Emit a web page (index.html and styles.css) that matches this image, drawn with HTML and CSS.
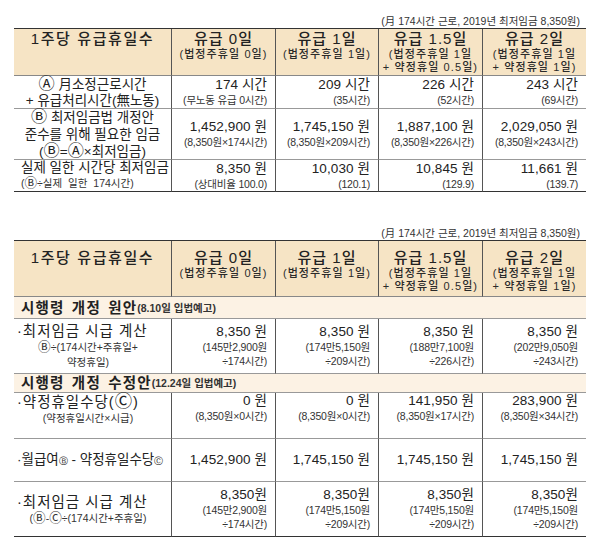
FILE: index.html
```html
<!DOCTYPE html>
<html lang="ko">
<head>
<meta charset="utf-8">
<link rel="stylesheet" href="styles.css">
</head>
<body>
<div class="page">
  <div class="caption">(月 174시간 근로, 2019년 최저임금 8,350원)</div>
  <div class="grid t1">
    <div class="c hd first"><div class="ttl wide">1주당 유급휴일수</div></div>
    <div class="c hd"><div class="ttl">유급 0일</div><div class="sub">(법정주휴일 0일)</div></div>
    <div class="c hd"><div class="ttl">유급 1일</div><div class="sub">(법정주휴일 1일)</div></div>
    <div class="c hd"><div class="ttl">유급 1.5일</div><div class="sub">(법정주휴일 1일</div><div class="sub">+ 약정휴일 0.5일)</div></div>
    <div class="c hd last"><div class="ttl">유급 2일</div><div class="sub">(법정주휴일 1일</div><div class="sub">+ 약정휴일 1일)</div></div>

    <div class="c lab ctr"><div class="ln"><span class="circ">Ⓐ</span> 月소정근로시간</div><div class="ln">+ 유급처리시간(無노동)</div></div>
    <div class="c val"><div class="v">174 시간</div><div class="s">(무노동 유급 0시간)</div></div>
    <div class="c val"><div class="v">209 시간</div><div class="s">(35시간)</div></div>
    <div class="c val"><div class="v">226 시간</div><div class="s">(52시간)</div></div>
    <div class="c val last"><div class="v">243 시간</div><div class="s">(69시간)</div></div>

    <div class="c lab ctr r2"><div class="ln"><span class="circ">Ⓑ</span> 최저임금법 개정안</div><div class="ln">준수를 위해 필요한 임금</div><div class="ln">(<span class="circ">Ⓑ</span>=<span class="circ">Ⓐ</span>×최저임금)</div></div>
    <div class="c val"><div class="v">1,452,900 원</div><div class="s">(8,350원×174시간)</div></div>
    <div class="c val"><div class="v">1,745,150 원</div><div class="s">(8,350원×209시간)</div></div>
    <div class="c val"><div class="v">1,887,100 원</div><div class="s">(8,350원×226시간)</div></div>
    <div class="c val last"><div class="v">2,029,050 원</div><div class="s">(8,350원×243시간)</div></div>

    <div class="c lab left end"><div class="ln">실제 일한 시간당 최저임금</div><div class="sm wide2">(<span class="circ">Ⓑ</span>÷실제 일한 174시간)</div></div>
    <div class="c val end"><div class="v">8,350 원</div><div class="s">(상대비율 100.0)</div></div>
    <div class="c val end"><div class="v">10,030 원</div><div class="s">(120.1)</div></div>
    <div class="c val end"><div class="v">10,845 원</div><div class="s">(129.9)</div></div>
    <div class="c val end last"><div class="v">11,661 원</div><div class="s">(139.7)</div></div>
  </div>

  <div class="caption cap2">(月 174시간 근로, 2019년 최저임금 8,350원)</div>
  <div class="grid t2">
    <div class="c hd first"><div class="ttl wide">1주당 유급휴일수</div></div>
    <div class="c hd"><div class="ttl">유급 0일</div><div class="sub">(법정주휴일 0일)</div></div>
    <div class="c hd"><div class="ttl">유급 1일</div><div class="sub">(법정주휴일 1일)</div></div>
    <div class="c hd"><div class="ttl">유급 1.5일</div><div class="sub">(법정주휴일 1일</div><div class="sub">+ 약정휴일 0.5일)</div></div>
    <div class="c hd last"><div class="ttl">유급 2일</div><div class="sub">(법정주휴일 1일</div><div class="sub">+ 약정휴일 1일)</div></div>

    <div class="sec"><span class="secT">시행령 개정 원안</span><span class="secS">(8.10일 입법예고)</span></div>

    <div class="c lab dot"><div class="ln big">·최저임금 시급 계산</div><div class="sm cx wide2"><span class="circ">Ⓑ</span>÷(174시간+주휴일+</div><div class="sm cx wide2">약정휴일)</div></div>
    <div class="c val"><div class="v">8,350 원</div><div class="s">(145만2,900원</div><div class="s">÷174시간)</div></div>
    <div class="c val"><div class="v">8,350 원</div><div class="s">(174만5,150원</div><div class="s">÷209시간)</div></div>
    <div class="c val"><div class="v">8,350 원</div><div class="s">(188만7,100원</div><div class="s">÷226시간)</div></div>
    <div class="c val last"><div class="v">8,350 원</div><div class="s">(202만9,050원</div><div class="s">÷243시간)</div></div>

    <div class="sec sec2"><span class="secT">시행령 개정 수정안</span><span class="secS">(12.24일 입법예고)</span></div>

    <div class="c lab dot top"><div class="ln big">·약정휴일수당(<span class="circ">Ⓒ</span>)</div><div class="sm cx">(약정휴일시간×시급)</div></div>
    <div class="c val top"><div class="v">0 원</div><div class="s">(8,350원×0시간)</div></div>
    <div class="c val top"><div class="v">0 원</div><div class="s">(8,350원×0시간)</div></div>
    <div class="c val top"><div class="v">141,950 원</div><div class="s">(8,350원×17시간)</div></div>
    <div class="c val top last"><div class="v">283,900 원</div><div class="s">(8,350원×34시간)</div></div>

    <div class="c lab dot"><div class="ln">·월급여<span class="tiny">Ⓑ</span> - 약정휴일수당<span class="tiny">Ⓒ</span></div></div>
    <div class="c val"><div class="v">1,452,900 원</div></div>
    <div class="c val"><div class="v">1,745,150 원</div></div>
    <div class="c val"><div class="v">1,745,150 원</div></div>
    <div class="c val last"><div class="v">1,745,150 원</div></div>

    <div class="c lab dot end"><div class="ln big">·최저임금 시급 계산</div><div class="sm cx">(<span class="circ">Ⓑ</span>-<span class="circ">Ⓒ</span>÷(174시간+주휴일)</div></div>
    <div class="c val end"><div class="v">8,350원</div><div class="s">(145만2,900원</div><div class="s">÷174시간)</div></div>
    <div class="c val end"><div class="v">8,350원</div><div class="s">(174만5,150원</div><div class="s">÷209시간)</div></div>
    <div class="c val end"><div class="v">8,350원</div><div class="s">(174만5,150원</div><div class="s">÷209시간)</div></div>
    <div class="c val end last"><div class="v">8,350원</div><div class="s">(174만5,150원</div><div class="s">÷209시간)</div></div>
  </div>
</div>
</body>
</html>
```

FILE: styles.css
```css
* { box-sizing: border-box; }
body {
  margin: 0;
  background: #ffffff;
  font-family: "Liberation Sans", "Noto Sans CJK KR", sans-serif;
  color: #222;
}
.page {
  padding: 15px 14px 0 14px;
  width: 600px;
}
.caption {
  font-size: 10.5px;
  line-height: 13px;
  height: 13px;
  text-align: right;
  padding-right: 6px;
  letter-spacing: 0;
  color: #333;
}
.cap2 { margin-top: 35px; }
.grid {
  display: grid;
  grid-template-columns: 158px 104px 103px 104px 103px;
  border-top: 1px solid #333;
}
.t1 { grid-template-rows: 47px 33px 51px 32px; }
.t2 { grid-template-rows: 56px 22px 55px 19px 46px 43px 55px; }
.c {
  border-right: 1px solid #555;
  border-bottom: 1px solid #999;
  display: flex;
  flex-direction: column;
  justify-content: center;
  min-width: 0;
  white-space: nowrap;
}
.c.last { border-right: none; }
.c.end { border-bottom: 1px solid #333; }
.circ {
  font-family: "DejaVu Sans", "Noto Sans CJK KR", sans-serif;
  font-size: 1.2em;
  line-height: 1;
}
.hd {
  background: #f6e4c5;
  justify-content: flex-start;
  align-items: center;
  padding-top: 1px;
  border-bottom-color: #888;
}
.t2 .hd { padding-top: 8px; }
.ttl {
  font-size: 15px;
  line-height: 18px;
  font-weight: 500;
  color: #222;
  letter-spacing: 1px;
}
.ttl.wide { letter-spacing: 1.6px; }
.sub {
  font-size: 11px;
  line-height: 13px;
  font-weight: 500;
  color: #2a2a2a;
  letter-spacing: 1.1px;
}
.lab { font-size: 13.5px; }
.lab .ln { line-height: 16px; }
.lab.ctr { align-items: center; }
.lab.r2 .ln { line-height: 17px; }
.lab.left { align-items: flex-start; padding-left: 7px; }
.lab.dot { align-items: flex-start; padding-left: 3px; }
.lab .big { font-size: 14.5px; letter-spacing: 1px; line-height: 18px; }
.sm {
  font-size: 10.5px;
  line-height: 15px;
  color: #333;
}
.sm.cx { align-self: center; margin-right: 12px; }
.wide2 { word-spacing: 3px; }
.val {
  align-items: flex-end;
  padding-right: 8px;
}
.v {
  font-size: 13.5px;
  line-height: 16px;
  letter-spacing: 0.1px;
}
.s {
  font-size: 10.5px;
  line-height: 14px;
  color: #333;
  letter-spacing: -0.2px;
}
.c.top { justify-content: flex-start; padding-top: 0px; }
.tiny { font-size: 9px; font-family: "DejaVu Sans", sans-serif; }
.sec {
  grid-column: 1 / span 5;
  background: #fcf2e4;
  border-bottom: 1px solid #999;
  display: flex;
  align-items: center;
  padding-left: 7px;
  white-space: nowrap;
}
.secT {
  font-size: 14.5px;
  font-weight: 700;
  letter-spacing: 1.2px;
  word-spacing: 2px;
  color: #222;
  line-height: 18px;
}
.secS {
  font-size: 10.5px;
  font-weight: 700;
  color: #333;
  line-height: 18px;
}
```
